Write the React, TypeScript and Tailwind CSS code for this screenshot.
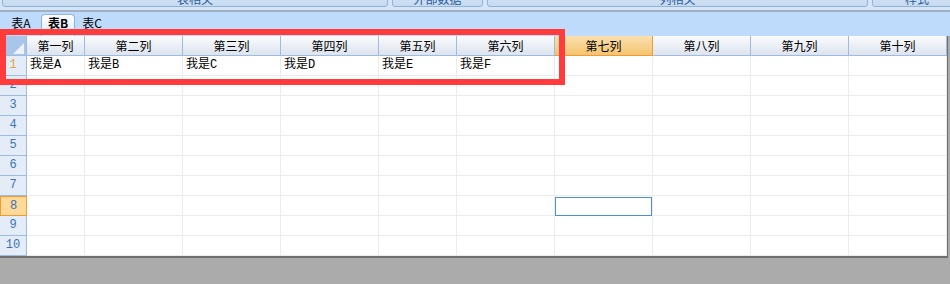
import React from 'react'

const colW = ['w-[58px]', 'w-[98px]', 'w-[98px]', 'w-[98px]', 'w-[78px]', 'w-[98px]', 'w-[98px]', 'w-[98px]', 'w-[98px]', 'w-[98px]']
const colNames = ['第一列', '第二列', '第三列', '第四列', '第五列', '第六列', '第七列', '第八列', '第九列', '第十列']
const firstRow = ['我是A', '我是B', '我是C', '我是D', '我是E', '我是F']

const ToolButton: React.FC<{ label: string; className: string }> = ({ label, className }) => (
  <div
    className={`${className} h-[20px] shrink-0 rounded-b-[3px] border border-[#93b2d8] bg-gradient-to-b from-[#dde9f7] to-[#c6daf1] text-center text-[12px] leading-[12px] pt-[5px] text-[#2c5c9c]`}
  >
    {label}
  </div>
)

export default function App() {
  return (
    <div className="relative w-[950px] h-[284px] overflow-hidden bg-[#ababab] font-['Noto_Sans_CJK_SC',sans-serif]">
      {/* ribbon buttons, cut off at the top */}
      <div className="h-[12px] flex items-end gap-[4px] px-[2px] pb-[3px] bg-[#d6e5f6] border-b-2 border-[#a2b2c6] overflow-hidden">
        <ToolButton label="表相关" className="w-[386px]" />
        <ToolButton label="外部数据" className="w-[91px]" />
        <ToolButton label="列相关" className="w-[381px]" />
        <ToolButton label="样式" className="w-[90px]" />
      </div>

      {/* sheet tabs */}
      <div className="h-[24px] flex items-end pl-[6px] bg-[#bfdbfc] text-[12px] text-black">
        <div className="w-[30px] h-[22px] pt-[2px] leading-[14px] text-center">表A</div>
        <div className="ml-[5px] w-[34px] h-[22px] pt-[1px] leading-[14px] text-center font-bold rounded-t-[4px] border border-b-0 border-[#8db2e3] bg-gradient-to-b from-white to-[#dce9f9]">
          表B
        </div>
        <div className="ml-[2px] w-[30px] h-[22px] pt-[2px] leading-[14px] text-center">表C</div>
      </div>

      {/* grid */}
      <div className="w-[948px] bg-white border-r-2 border-b-2 border-[#6f6f6f]">
        <div className="flex h-[20px]">
          <div className="relative w-[27px] h-[20px] shrink-0 bg-[#a9c5ea] border-r border-b border-[#9ebbe0]">
            <svg className="absolute left-[13px] top-[7px]" width="11" height="11" viewBox="0 0 11 11">
              <polygon points="11,0 11,11 0,11" fill="#eef3fa" />
            </svg>
          </div>
          {colNames.map((name, i) => (
            <div
              key={name}
              className={`${colW[i]} h-[20px] shrink-0 border-r border-b text-center text-[12px] leading-[19px] text-black ${
                i === 6
                  ? 'bg-gradient-to-b from-[#fae0ae] to-[#f4c46f] border-[#f39a35]'
                  : 'bg-gradient-to-b from-[#fafbfd] to-[#dde4ee] border-[#9ebbe0]'
              }`}
            >
              {name}
            </div>
          ))}
        </div>

        {Array.from({ length: 10 }, (_, r) => (
          <div key={r} className="flex h-[20px]">
            <div
              className={`w-[27px] h-[20px] shrink-0 text-center text-[12px] leading-[19px] font-['Liberation_Mono',monospace] ${
                r === 7
                  ? 'bg-[#ffd997] border border-[#f39a35] text-[#3b73b9] leading-[17px]'
                  : r === 0
                    ? 'bg-[#e4ecf7] border-r border-b border-[#9ebbe0] text-[#e3a23a]'
                    : 'bg-[#e4ecf7] border-r border-b border-[#9ebbe0] text-[#3b73b9]'
              }`}
            >
              {r + 1}
            </div>
            {colNames.map((name, c) => (
              <div
                key={name}
                className={`relative ${colW[c]} h-[20px] shrink-0 border-r border-b border-[#ececec] pl-[3px] text-[12px] leading-[19px] text-black font-['Liberation_Mono','Noto_Sans_CJK_SC',monospace]`}
              >
                {r === 0 ? firstRow[c] : ''}
                {r === 7 && c === 6 && (
                  <div className="absolute left-0 top-[1px] w-[97px] h-[19px] border border-[#4b8fdb]" />
                )}
              </div>
            ))}
          </div>
        ))}
      </div>

      {/* red annotation box */}
      <div className="absolute left-0 top-[29px] w-[565px] h-[56px] border-[6px] border-[#ff3b3b]" />
    </div>
  )
}
